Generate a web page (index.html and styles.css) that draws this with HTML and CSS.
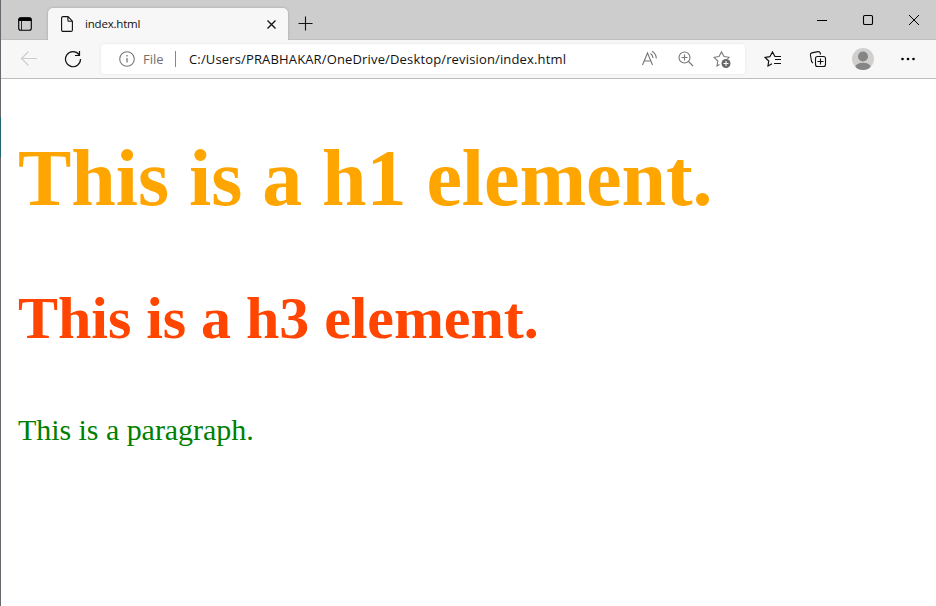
FILE: index.html
```html
<!DOCTYPE html>
<html lang="en">
<head>
<meta charset="utf-8">
<title>index.html</title>
<link rel="stylesheet" href="styles.css">
</head>
<body>
<div class="window">
  <header class="tabstrip">
    <div class="tab-menu"><svg width="14" height="14" viewBox="0 0 14 14"><rect x=".7" y=".7" width="12.6" height="12.6" rx="2" fill="none" stroke="#000" stroke-width="1.1"/><path d="M.5 4V2.5a2 2 0 0 1 2-2h9a2 2 0 0 1 2 2V4z"/><path d="M3.5 4v9" stroke="#000" stroke-width=".8"/></svg></div>
    <div class="tab">
      <svg class="page-icon" width="12" height="16" viewBox="0 0 12 16" fill="none" stroke="#111" stroke-width="1.1"><path d="M2 .6h5l4.400 4.500V14a1.400 1.400 0 0 1-1.400 1.400H2A1.400 1.400 0 0 1 .6 14V2A1.400 1.400 0 0 1 2 .6zM6.900.8v3.400a1 1 0 0 0 1 1h3.400"/></svg>
      <span class="tab-title">index.html</span>
      <svg width="9" height="9" viewBox="0 0 9 9" stroke="#111" stroke-width="1.3"><path d="M.5.5l8 8M8.500.5l-8 8"/></svg>
    </div>
    <svg class="new-tab" width="15" height="15" viewBox="0 0 15 15" stroke="#111" stroke-width="1.1"><path d="M7.500.5v14M.5 7.500h14"/></svg>
    <div class="controls">
      <span><svg width="12" height="12" viewBox="0 0 12 12" stroke="#000"><path d="M1 6.500h10"/></svg></span>
      <span><svg width="12" height="12" viewBox="0 0 12 12" fill="none" stroke="#000" stroke-width="1.1"><rect x="1.500" y="1.500" width="9" height="9" rx="1.300"/></svg></span>
      <span><svg width="12" height="12" viewBox="0 0 12 12" stroke="#000"><path d="M1 1l10 10M11 1L1 11"/></svg></span>
    </div>
  </header>
  <nav class="toolbar">
    <svg class="back" width="18" height="18" viewBox="0 0 18 18" fill="none" stroke="#ccc" stroke-width="1.1"><path d="M17 8.500H1.500M8.500 1.500l-7 7 7 7"/></svg>
    <svg class="reload" width="18" height="18" viewBox="0 0 18 18" fill="none" stroke="#111" stroke-width="1.200"><path d="M15 4.700A7.500 7.500 0 1 0 16.500 9M15.500 1v4.500H11"/></svg>
    <div class="address">
      <svg class="info" width="16" height="16" viewBox="0 0 16 16" fill="none" stroke="#777" stroke-width="1.100"><circle cx="8" cy="8" r="7.300"/><path d="M8 7v4.500M8 4v1.500" stroke-width="1.300"/></svg>
      <span class="scheme">File</span>
      <span class="divider"></span>
      <span class="url">C:/Users/PRABHAKAR/OneDrive/Desktop/revision/index.html</span>
      <div class="actions">
        <svg width="18" height="18" viewBox="0 0 18 18" fill="none" stroke="#777" stroke-width="1.100"><path d="M1.500 15L6.500 3l5 12M3.200 11h6.600M9.500 3.500q2.300 1.500 2.500 4.500M11 1.300q4.200 2.400 4.300 7.200"/></svg>
        <svg width="18" height="18" viewBox="0 0 18 18" fill="none" stroke="#777" stroke-width="1.100"><circle cx="7.500" cy="7.500" r="5.500"/><path d="M11.500 11.500l4.500 4.500M4.500 7.500h6M7.500 4.500v6"/></svg>
        <svg width="18" height="18" viewBox="0 0 18 18" fill="none" stroke="#777" stroke-width="1.100"><path d="M6.500 14.500L4 16l.8-5L1 7.300l5-.8L8.500 2 11 6.500l5 .8-1.500 1.500"/><circle cx="13" cy="13.500" r="4.500" fill="#666" stroke="none"/><path d="M13 11v5M10.500 13.500h5" stroke="#fff"/></svg>
      </div>
    </div>
    <div class="tools">
      <span><svg width="18" height="18" viewBox="0 0 18 18" fill="none" stroke="#111" stroke-width="1.200"><path d="M8 13.800L4 16l.7-5L1.200 7.500l4.600-.8L8.500 2l2.400 4.500H17M11 9.500h6M10 13.500h7"/></svg></span>
      <span><svg width="18" height="18" viewBox="0 0 18 18" fill="none" stroke="#111" stroke-width="1.100"><rect x="6.500" y="6.500" width="10" height="10" rx="2"/><path d="M11.500 8.500v6M8.500 11.500h6M4 13Q3 12.500 2.600 11.500L1.400 5Q1.200 3.300 2.800 2.900L9 1.600Q10.800 1.400 11.200 3l.4 1.500"/></svg></span>
      <span><svg width="22" height="22" viewBox="0 0 22 22"><defs><clipPath id="face"><circle cx="11" cy="11" r="11"/></clipPath></defs><circle cx="11" cy="11" r="11" fill="#d1d0ce"/><g fill="#858585" clip-path="url(#face)"><circle cx="11" cy="8.500" r="5"/><ellipse cx="11" cy="19.500" rx="7.800" ry="4.800"/></g></svg></span>
      <span><svg width="16" height="4" viewBox="0 0 16 4"><circle cx="2.500" cy="2" r="1.300"/><circle cx="8" cy="2" r="1.300"/><circle cx="13.500" cy="2" r="1.300"/></svg></span>
    </div>
  </nav>
  <main>
    <h1>This is a h1 element.</h1>
    <h3>This is a h3 element.</h3>
    <p>This is a paragraph.</p>
  </main>
</div>
</body>
</html>
```
FILE: styles.css
```css
* { box-sizing: border-box; }
body {
  margin: 0;
  overflow: hidden;
  background: linear-gradient(#68676d 117px, #1f6870 117px 157px, #68676d 157px);
}
svg { display: block; flex: none; }
.window {
  height: 606px;
  margin-left: 1px;
  background: #fff;
  font-family: "Open Sans", "Noto Sans", sans-serif;
}
.tabstrip {
  display: flex;
  height: 40px;
  background: #cdcdcd;
  box-shadow: inset 0 -1px #c0c0c0;
}
.tab-menu { width: 47px; padding: 17px 0 0 17px; }
.tab {
  display: flex;
  align-items: center;
  width: 240px;
  height: 32px;
  margin-top: 8px;
  padding: 0 12px 0 13px;
  background: #f7f7f7;
  border-radius: 5px 5px 0 0;
  box-shadow: 0 0 3px rgba(0, 0, 0, .22);
  clip-path: inset(-4px -4px 0);
}
.tab-title {
  flex: 1;
  margin-left: 12px;
  font-size: 11.5px;
  letter-spacing: -.2px;
  line-height: 16px;
  color: #111;
}
.new-tab { margin: 16px 0 0 10px; }
.controls { display: flex; margin-left: auto; margin-right: -1px; }
.controls span { width: 46px; padding: 14px 0 0 17px; }
.toolbar {
  display: flex;
  align-items: center;
  height: 39px;
  background: #f7f7f7;
  border-bottom: 1px solid #bdbdbd;
}
.back { margin-left: 19px; }
.reload { margin-left: 26px; }
.address {
  display: flex;
  align-items: center;
  width: 644px;
  height: 30px;
  margin-left: 19px;
  padding-left: 18px;
  background: #fff;
  border-radius: 4px;
  box-shadow: 0 0 3px rgba(0, 0, 0, .08);
  font-size: 13px;
  line-height: 18px;
}
.scheme { width: 32px; margin-left: 8px; color: #707070; }
.divider { width: 1px; height: 16px; background: #888; }
.url { margin-left: 13px; color: #111; letter-spacing: .15px; white-space: nowrap; }
.actions { display: flex; gap: 18px; margin-left: auto; margin-right: 14px; }
.tools { display: flex; align-items: center; margin-left: 5px; }
.tools span { display: flex; justify-content: center; width: 45px; }
main { padding: 8px 17px; font-family: "Liberation Serif", serif; }
h1 { margin: 45px 0 0; font-size: 80px; letter-spacing: -.05px; line-height: 92px; color: orange; }
h3 { margin: 60px 0 0; font-size: 60px; letter-spacing: -.05px; line-height: 69px; color: orangered; }
p { margin: 60px 0 0; font-size: 30px; letter-spacing: -.05px; line-height: 34px; color: green; }
```
